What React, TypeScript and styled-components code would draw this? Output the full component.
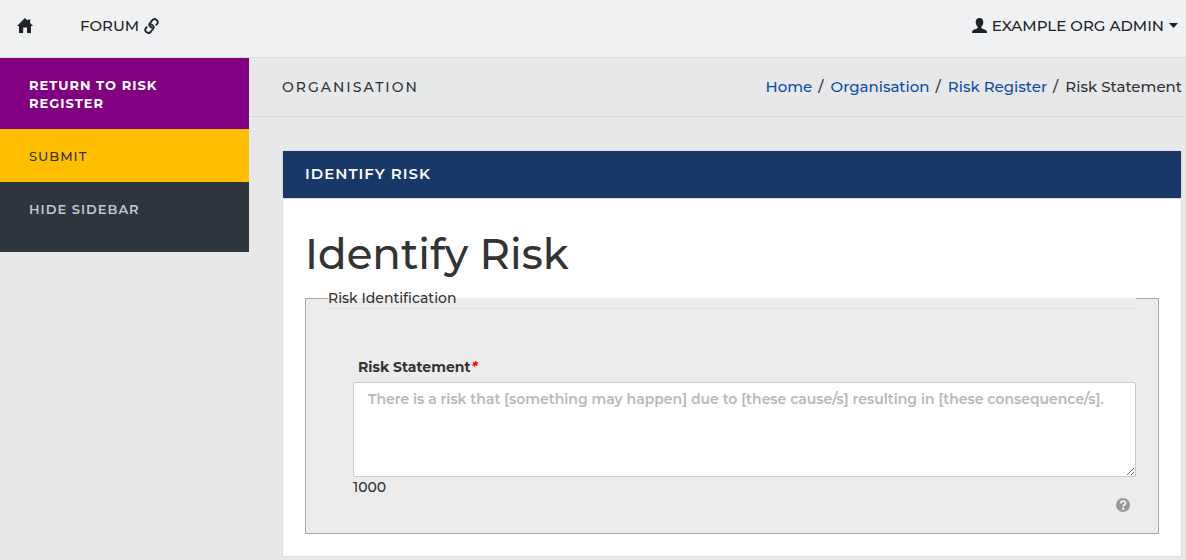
import React from "react";
import styled, { createGlobalStyle } from "styled-components";

const GlobalStyle = createGlobalStyle`
  *, *::before, *::after { box-sizing: border-box; }
  body {
    margin: 0;
    background: #e7e8ea;
    color: #333;
    font-family: Montserrat, Inter, "Liberation Sans", sans-serif;
    font-size: 15px;
    font-weight: 500;
    line-height: 20px;
  }
  a { color: #0d4ea6; text-decoration: none; }
`;

const TopBar = styled.header`
  display: flex;
  align-items: center;
  justify-content: space-between;
  height: 58px;
  padding: 0 8px 6px 17px;
  background: #eff1f3;
  border-bottom: 1px solid #d7d9dc;
`;

const TopNav = styled.nav`
  display: flex;
  align-items: center;
  gap: 47px;
`;

const TopLink = styled.a`
  display: flex;
  align-items: center;
  gap: 5px;
  color: #1b2329;
`;

const UserButton = styled.button`
  display: flex;
  align-items: center;
  gap: 5px;
  padding: 0;
  border: 0;
  background: none;
  color: #1b2329;
  font: inherit;
`;

const Layout = styled.div`
  display: flex;
  align-items: flex-start;
`;

const Sidebar = styled.nav`
  display: flex;
  flex-direction: column;
  flex: 0 0 249px;
  padding-bottom: 17px;
  background: #2e363d;
`;

const SideItem = styled.button<{ $bg: string; $fg: string; $weight: number }>`
  padding: 18px 64px 17px 29px;
  border: 0;
  background: ${(p) => p.$bg};
  color: ${(p) => p.$fg};
  font: inherit;
  font-size: 13px;
  font-weight: ${(p) => p.$weight};
  line-height: 18px;
  letter-spacing: 1px;
  text-align: left;
`;

const Main = styled.main`
  flex: 1;
  min-width: 0;
`;

const TitleRow = styled.div`
  display: flex;
  align-items: center;
  justify-content: space-between;
  height: 59px;
  padding: 0 4px 0 33px;
  border-bottom: 1px solid #d7d9dc;
`;

const PageTitle = styled.h2`
  margin: 0;
  font-size: 14px;
  font-weight: 500;
  letter-spacing: 2px;
`;

const Crumbs = styled.ol`
  display: flex;
  margin: 0;
  padding: 0;
  list-style: none;
`;

const Crumb = styled.li`
  &:not(:last-child)::after {
    content: "/";
    padding: 0 7px 0 6px;
  }
`;

const Panel = styled.section`
  margin: 33px 4px 3px 33px;
  background: #fff;
  border: 1px solid #dcdddf;
  border-radius: 2px;
`;

const PanelHeader = styled.h3`
  margin: 0;
  padding: 13px 22px 14px;
  background: #183868;
  border-bottom: 1px solid #dcdddf;
  color: #fff;
  font-size: 15px;
  font-weight: 600;
  line-height: 20px;
  letter-spacing: 1px;
`;

const PanelBody = styled.div`
  padding: 32px 22px 22px;
`;

const Heading = styled.h1`
  margin: 0 0 11px;
  font-size: 42px;
  font-weight: 500;
  line-height: 46px;
`;

const FieldGroup = styled.fieldset`
  margin: 0;
  padding: 0 22px 21px;
  background: #ececec;
  border: 1px solid #a9a9a9;
`;

const GroupLegend = styled.legend`
  width: 100%;
  padding: 0;
  border-bottom: 1px solid #e2e2e2;
  font-size: 14px;
`;

const Field = styled.div`
  display: flex;
  flex-direction: column;
  padding: 48px 0 0 25px;
`;

const FieldLabel = styled.label`
  padding-left: 5px;
  margin-bottom: 5px;
  font-size: 14px;
  font-weight: 700;
`;

const Required = styled.span`
  padding-left: 1px;
  color: #f00;
  font-style: italic;
`;

const TextBox = styled.textarea`
  display: block;
  width: 100%;
  height: 95px;
  padding: 6px 14px;
  border: 1px solid #ccc;
  border-radius: 2px;
  background: #fff;
  color: #333;
  font: inherit;
  font-size: 14px;
  font-weight: 600;
  line-height: 20px;
  resize: both;
  &::placeholder { color: #b8b8b8; opacity: 1; }
`;

const Counter = styled.span`
  font-size: 14px;
`;

const HelpButton = styled.button`
  display: flex;
  align-self: flex-end;
  margin-right: 6px;
  padding: 1px 0 0;
  border: 0;
  background: none;
`;

const HomeIcon = () => (
  <svg width="16" height="15" viewBox="0 0 16 15" fill="currentColor" aria-label="Home">
    <path d="M8 0 L11 2.7 V1.4 H13.2 V4.9 L16 8 H14 V14.5 Q14 15 13.5 15 H10 V9.5 H6.2 V15 H2.5 Q2 15 2 14.5 V8 H0 Z" />
  </svg>
);

const LinkIcon = () => (
  <svg width="15" height="16" viewBox="0 0 15 16" fill="none" stroke="currentColor" strokeWidth="1.8" aria-hidden="true">
    <path d="M8.6 10.3 L6.2 8.6 C4.9 7.5 4.9 6.4 5.8 5.2 L8.3 2.2 C9.4 .9 10.8 .7 12.2 1.7 C14 3 14.4 4.2 13.3 5.6 L11.8 7.4" />
    <path d="M6.4 5.7 L8.8 7.4 C10.1 8.5 10.1 9.6 9.2 10.8 L6.7 13.8 C5.6 15.1 4.2 15.3 2.8 14.3 C1 13 .6 11.8 1.7 10.4 L3.2 8.6" />
  </svg>
);

const UserIcon = () => (
  <svg width="15" height="15" viewBox="0 0 15 15" fill="currentColor" aria-hidden="true">
    <path d="M7.5 0 C9.9 0 11.2 1.5 11.2 3.7 C11.4 4 11.5 4.5 11.2 5.1 C10.9 6.8 10.3 7.9 9.4 8.7 C9.1 9.5 9.4 10.1 10 10.4 L13.6 12 C14.6 12.5 15 13.3 15 14.2 V15 H0 V14.2 C0 13.3 .4 12.5 1.4 12 L5 10.4 C5.6 10.1 5.9 9.5 5.6 8.7 C4.7 7.9 4.1 6.8 3.8 5.1 C3.5 4.5 3.6 4 3.8 3.7 C3.8 1.5 5.1 0 7.5 0 Z" />
  </svg>
);

const Caret = () => (
  <svg width="9" height="5" viewBox="0 0 9 5" fill="currentColor" aria-hidden="true">
    <path d="M0 0 H9 L4.5 5 Z" />
  </svg>
);

const HelpIcon = () => (
  <svg width="14" height="14" viewBox="0 0 14 14" aria-hidden="true">
    <circle cx="7" cy="7" r="7" fill="#999" />
    <path d="M4.7 5.5 C4.7 2.3 9.5 2.4 9.5 5 C9.5 6.6 7.3 6.5 7.3 8.6" fill="none" stroke="#eee" strokeWidth="1.9" />
    <path d="M6.1 9.5 H8.3 V11.9 H6.1 Z" fill="#eee" />
  </svg>
);

export default function App() {
  return (
    <>
      <GlobalStyle />
      <TopBar>
        <TopNav aria-label="Main">
          <TopLink href="#home"><HomeIcon /></TopLink>
          <TopLink href="#forum">FORUM<LinkIcon /></TopLink>
        </TopNav>
        <UserButton type="button"><UserIcon />EXAMPLE ORG ADMIN<Caret /></UserButton>
      </TopBar>
      <Layout>
        <Sidebar aria-label="Actions">
          <SideItem type="button" $bg="#800080" $fg="#fff" $weight={700}>RETURN TO RISK REGISTER</SideItem>
          <SideItem type="button" $bg="#ffbf00" $fg="#333" $weight={500}>SUBMIT</SideItem>
          <SideItem type="button" $bg="#2e363d" $fg="#c0c7cd" $weight={600}>HIDE SIDEBAR</SideItem>
        </Sidebar>
        <Main>
          <TitleRow>
            <PageTitle>ORGANISATION</PageTitle>
            <nav aria-label="Breadcrumb">
              <Crumbs>
                <Crumb><a href="#home">Home</a></Crumb>
                <Crumb><a href="#organisation">Organisation</a></Crumb>
                <Crumb><a href="#register">Risk Register</a></Crumb>
                <Crumb aria-current="page">Risk Statement</Crumb>
              </Crumbs>
            </nav>
          </TitleRow>
          <Panel>
            <PanelHeader>IDENTIFY RISK</PanelHeader>
            <PanelBody>
              <Heading>Identify Risk</Heading>
              <FieldGroup>
                <GroupLegend>Risk Identification</GroupLegend>
                <Field>
                  <FieldLabel htmlFor="statement">Risk Statement<Required>*</Required></FieldLabel>
                  <TextBox
                    id="statement"
                    maxLength={1000}
                    placeholder="There is a risk that [something may happen] due to [these cause/s] resulting in [these consequence/s]."
                  />
                  <Counter>1000</Counter>
                  <HelpButton type="button" aria-label="Help"><HelpIcon /></HelpButton>
                </Field>
              </FieldGroup>
            </PanelBody>
          </Panel>
        </Main>
      </Layout>
    </>
  );
}
